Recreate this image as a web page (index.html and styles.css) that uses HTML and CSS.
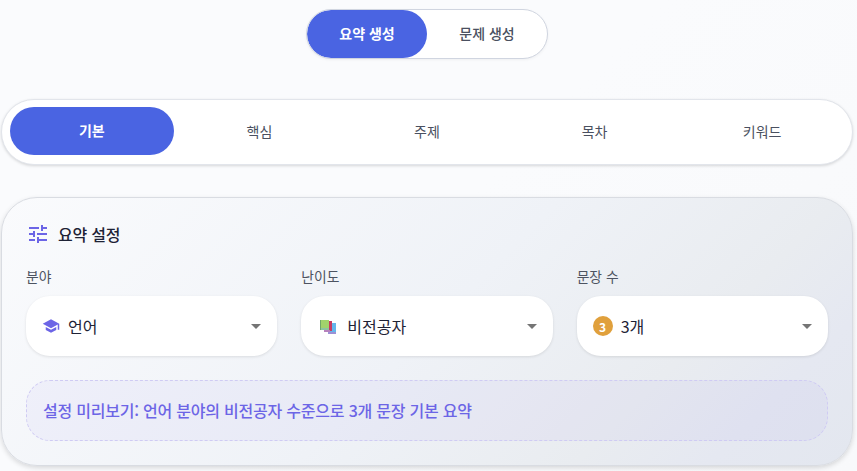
FILE: index.html
```html
<!DOCTYPE html>
<html lang="ko">
<head>
<meta charset="utf-8">
<title>요약 설정</title>
<link rel="stylesheet" href="styles.css">
</head>
<body>
<main class="page">
  <div class="toggle">
    <button class="toggle-item active">요약 생성</button>
    <button class="toggle-item">문제 생성</button>
  </div>
  <nav class="tabs">
    <button class="tab active">기본</button>
    <button class="tab">핵심</button>
    <button class="tab">주제</button>
    <button class="tab">목차</button>
    <button class="tab">키워드</button>
  </nav>
  <section class="card">
    <h2 class="card-title">
      <svg width="24" height="24" viewBox="0 0 24 24" fill="currentColor"><path d="M3 17v2h6v-2H3zM3 5v2h10V5H3zm10 16v-2h8v-2h-8v-2h-2v6h2zM7 9v2H3v2h4v2h2V9H7zm14 4v-2H11v2h10zm-6-4h2V7h4V5h-4V3h-2v6z"/></svg>
      <span>요약 설정</span>
    </h2>
    <div class="fields">
      <div class="field">
        <label class="label">분야</label>
        <div class="select">
          <svg class="cap" width="18" height="18" viewBox="0 0 24 24" fill="currentColor"><path d="M5 13.18v4L12 21l7-3.82v-4L12 17l-7-3.82zM12 3 1 9l11 6 9-4.91V17h2V9L12 3z"/></svg>
          <span class="value">언어</span>
          <svg class="arrow" width="24" height="24" viewBox="0 0 24 24" fill="currentColor"><path d="M7 10l5 5 5-5z"/></svg>
        </div>
      </div>
      <div class="field">
        <label class="label">난이도</label>
        <div class="select">
          <svg class="books" width="20" height="20" viewBox="0 0 20 20">
            <path fill="#64b5eb" d="M11 7h8v9h-8z"/><path fill="#9b91d5" d="M11 16h8v2h-8z"/>
            <path fill="#c83b61" d="M7 5h8v10H7z"/><path fill="#b782bd" d="M7 14h6v2H7z"/>
            <path fill="#a1d36b" d="M3 4h9v9H3z"/><path fill="#6fa66a" d="M3 4h1v10H3z"/><path fill="#8cc4a0" d="M4 12h8v2H4z"/>
          </svg>
          <span class="value">비전공자</span>
          <svg class="arrow" width="24" height="24" viewBox="0 0 24 24" fill="currentColor"><path d="M7 10l5 5 5-5z"/></svg>
        </div>
      </div>
      <div class="field">
        <label class="label">문장 수</label>
        <div class="select">
          <span class="count">3</span>
          <span class="value">3개</span>
          <svg class="arrow" width="24" height="24" viewBox="0 0 24 24" fill="currentColor"><path d="M7 10l5 5 5-5z"/></svg>
        </div>
      </div>
    </div>
    <div class="preview">설정 미리보기: 언어 분야의 비전공자 수준으로 3개 문장 기본 요약</div>
  </section>
</main>
</body>
</html>
```
FILE: styles.css
```css
* { box-sizing: border-box; }
body {
  margin: 0;
  height: 471px;
  overflow: hidden;
  background: linear-gradient(135deg, #fafbfd, #fafbfd 50%, #f8f9fb);
  font-family: "Noto Sans CJK KR", sans-serif;
  color: #1e2235;
}
button {
  border: 0;
  padding: 0;
  background: none;
  font: inherit;
  color: #4a5060;
}
.page {
  width: 852px;
  margin-left: 1px;
  padding-top: 9px;
  display: flex;
  flex-direction: column;
}
.toggle {
  align-self: center;
  width: 242px;
  height: 50px;
  display: flex;
  border: 1px solid #d0d5e0;
  border-radius: 25px;
  background: #fff;
  overflow: hidden;
  box-shadow: 0 1px 3px rgba(0, 0, 0, .05);
}
.toggle-item {
  flex: 1;
  padding-bottom: 2px;
  border-radius: 24px;
  font-size: 14px;
  font-weight: 500;
}
.toggle-item.active, .tab.active {
  background: #4a64e2;
  color: #fff;
  font-weight: 700;
}
.tabs {
  margin-top: 40px;
  height: 66px;
  padding: 8px;
  display: flex;
  gap: 4px;
  border: 1px solid #e2e5eb;
  border-radius: 33px;
  background: #fff;
  box-shadow: 0 1px 3px rgba(0, 0, 0, .15);
}
.tab {
  flex: 1;
  padding-bottom: 2px;
  border-radius: 24px;
  font-size: 14px;
}
.tab.active { transform: translateY(-1px); }
.card {
  margin-top: 32px;
  height: 269px;
  padding: 24px;
  border: 1px solid #d9dce2;
  border-radius: 36px;
  background: linear-gradient(135deg, #fafbfd 0%, #eff2f7 50%, #e9ecf0 75%, #e5e8f1 87%, #e3e7ef 100%);
  box-shadow: 0 2px 5px rgba(0, 0, 0, .14);
}
.card-title {
  margin: 0;
  height: 24px;
  display: flex;
  align-items: center;
  gap: 8px;
  font-size: 16px;
  font-weight: 500;
  letter-spacing: -.2px;
}
.card-title svg { color: #6c65e6; }
.fields {
  margin-top: 19px;
  display: grid;
  grid-template-columns: repeat(3, 1fr);
  gap: 24px;
}
.label {
  display: block;
  height: 22px;
  margin-bottom: 9px;
  font-size: 13.8px;
  line-height: 22px;
  color: #4d5361;
}
.select {
  height: 60px;
  padding: 0 9px 0 16px;
  display: flex;
  align-items: center;
  border-radius: 24px;
  background: #fff;
  box-shadow: 0 1px 3px rgba(0, 0, 0, .1);
  font-size: 16px;
}
.value { flex: 1; }
.cap { color: #6c65e6; margin-right: 8px; }
.books { margin-right: 10px; }
.arrow { color: #757575; }
.count {
  width: 20px;
  height: 20px;
  margin-right: 8px;
  border-radius: 50%;
  background: #e0a03c;
  color: #fff;
  font-size: 12px;
  font-weight: 700;
  line-height: 22px;
  text-align: center;
}
.preview {
  margin-top: 24px;
  height: 61px;
  padding: 0 16px 1px;
  display: flex;
  align-items: center;
  border: 1px dashed #cfcbf3;
  border-radius: 24px;
  background: rgba(108, 101, 230, .05);
  color: #6c65e6;
  font-size: 16px;
  font-weight: 500;
  letter-spacing: -.22px;
}
```
